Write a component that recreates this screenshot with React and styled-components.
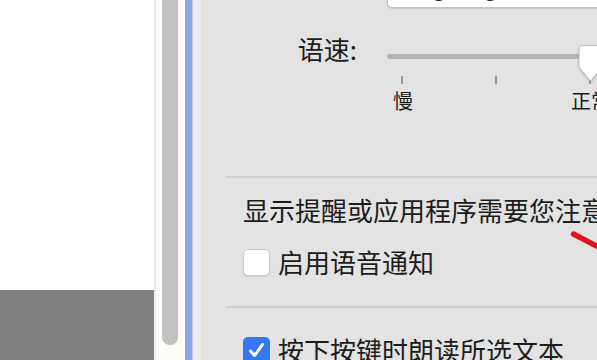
import React from "react";
import styled, { createGlobalStyle } from "styled-components";

const GlobalStyle = createGlobalStyle`
    html, body {
        margin: 0;
        padding: 0;
        overflow: hidden;
        background: #e3e3e3;
    }
    * {
        box-sizing: border-box;
    }
`;

const Screen = styled.div`
    display: flex;
    width: 597px;
    height: 360px;
    overflow: hidden;
    font-family: "Noto Sans CJK SC", "Noto Sans", sans-serif;
    color: #1c1c1c;
`;

const Sidebar = styled.div`
    width: 154px;
    display: flex;
    flex-direction: column;
`;

const SidebarList = styled.div`
    flex: 1;
    background: #ffffff;
`;

const SidebarFooter = styled.div`
    height: 70px;
    background: #808080;
`;

const ScrollGutter = styled.div`
    width: 31px;
    border-left: 2px solid #ececec;
    background: #fdfcf8;
    padding-left: 6px;
`;

const ScrollThumb = styled.div`
    width: 16px;
    height: 345px;
    background: #c1c1c1;
    border-radius: 0 0 8px 8px;
`;

const FocusBar = styled.div`
    width: 8px;
    background: #88a7ea;
    border-right: 1px solid #c6ccd8;
`;

const Panel = styled.div`
    flex: 1;
    position: relative;
    overflow: hidden;
    background: #e3e3e3;
    border-left: 8px solid #ececec;
    padding-left: 25px;
    display: flex;
    flex-direction: column;
`;

const FormRow = styled.div`
    display: grid;
    grid-template-columns: 131px 240px;
    column-gap: 30px;
    align-items: start;
    margin-top: ${props => props.top}px;
    height: ${props => props.height ? `${props.height}px` : "auto"};
    flex-shrink: 0;
`;

const Label = styled.div`
    text-align: right;
    font-size: 26px;
    line-height: 28px;
    margin-top: ${props => props.lift ? -props.lift : -3}px;
    white-space: nowrap;
`;

const PopupField = styled.div`
    height: 30px;
    background: #ffffff;
    border: 1px solid #c3c3c3;
    border-radius: 5px;
    box-shadow: 0 1px 1px rgba(0, 0, 0, 0.12);
    padding-left: 12px;
    font-size: 22px;
    line-height: 14px;
    overflow: hidden;
`;

const SliderBox = styled.div`
    display: flex;
    flex-direction: column;
`;

const TrackArea = styled.div`
    position: relative;
    height: 36px;
    display: flex;
    align-items: center;
`;

const Track = styled.div`
    width: 100%;
    height: 5px;
    border-radius: 3px;
    background: #b4b4b4;
`;

const Thumb = styled.svg`
    position: absolute;
    left: 191px;
    top: 7px;
    filter: drop-shadow(0 1px 1px rgba(0, 0, 0, 0.2));
`;

const Ticks = styled.div`
    display: flex;
    gap: 92px;
    padding-left: 14px;
    margin-top: 2px;
    height: 8px;
`;

const Tick = styled.div`
    width: 2px;
    height: 8px;
    background: #9b9b9b;
`;

const TickLabels = styled.div`
    display: flex;
    gap: 158px;
    padding-left: 6px;
    margin-top: 5px;
    font-size: 20px;
    line-height: 24px;
    white-space: nowrap;
`;

const Divider = styled.div`
    height: 2px;
    background: #d0d0d0;
    margin-top: ${props => props.top}px;
    flex-shrink: 0;
`;

const SectionTitle = styled.div`
    margin-top: ${props => props.top}px;
    padding-left: 17px;
    font-size: 26px;
    line-height: 36px;
    white-space: nowrap;
    flex-shrink: 0;
`;

const CheckRow = styled.label`
    display: flex;
    align-items: center;
    gap: 8px;
    margin-top: ${props => props.top}px;
    padding-left: 17px;
    height: 36px;
    font-size: 26px;
    line-height: 36px;
    white-space: nowrap;
    flex-shrink: 0;
`;

const Box = styled.span`
    width: 27px;
    height: 27px;
    border-radius: 5px;
    flex-shrink: 0;
    display: flex;
    align-items: center;
    justify-content: center;
    background: ${props => props.checked ? "#3278f5" : "#ffffff"};
    border: ${props => props.checked ? "none" : "1px solid #c8c8c8"};
    box-shadow: 0 1px 1px rgba(0, 0, 0, 0.1);
`;

const Annotation = styled.svg`
    position: absolute;
    left: 369px;
    top: 230px;
`;

const Checkbox = ({ checked }) => (
    <Box checked={checked}>
        {checked && (
            <svg width="19" height="19" viewBox="0 0 19 19">
                <path d="M3.5 10 L7.5 14.5 L15.5 3.5" fill="none" stroke="#ffffff" strokeWidth="3" strokeLinecap="round" strokeLinejoin="round" />
            </svg>
        )}
    </Box>
);

const App = () => (
    <>
        <GlobalStyle />
        <Screen>
            <Sidebar>
                <SidebarList />
                <SidebarFooter />
            </Sidebar>
            <ScrollGutter>
                <ScrollThumb />
            </ScrollGutter>
            <FocusBar />
            <Panel>
                <FormRow top={-22} height={30}>
                    <Label lift={7}>系统嗓音:</Label>
                    <PopupField>Ting-Ting</PopupField>
                </FormRow>
                <FormRow top={30}>
                    <Label>语速:</Label>
                    <SliderBox>
                        <TrackArea>
                            <Track />
                            <Thumb width="25" height="38" viewBox="0 0 25 38">
                                <path d="M4 0.5 H20.5 A3.5 3.5 0 0 1 24 4 V22 L12.5 36 L1 22 V4 A3.5 3.5 0 0 1 4 0.5 Z" fill="#ffffff" stroke="#bdbdbd" strokeWidth="1" />
                            </Thumb>
                        </TrackArea>
                        <Ticks>
                            <Tick />
                            <Tick />
                            <Tick />
                        </Ticks>
                        <TickLabels>
                            <span>慢</span>
                            <span>正常</span>
                        </TickLabels>
                    </SliderBox>
                </FormRow>
                <Divider top={63} />
                <SectionTitle top={14}>显示提醒或应用程序需要您注意时</SectionTitle>
                <CheckRow top={16}>
                    <Checkbox />
                    启用语音通知
                </CheckRow>
                <Divider top={26} />
                <CheckRow top={24}>
                    <Checkbox checked />
                    按下按键时朗读所选文本
                </CheckRow>
                <Annotation width="40" height="30" viewBox="0 0 40 30">
                    <path d="M3.5 4 L38 22" stroke="#e3131b" strokeWidth="5.5" strokeLinecap="round" fill="none" />
                </Annotation>
            </Panel>
        </Screen>
    </>
);

export default App;
